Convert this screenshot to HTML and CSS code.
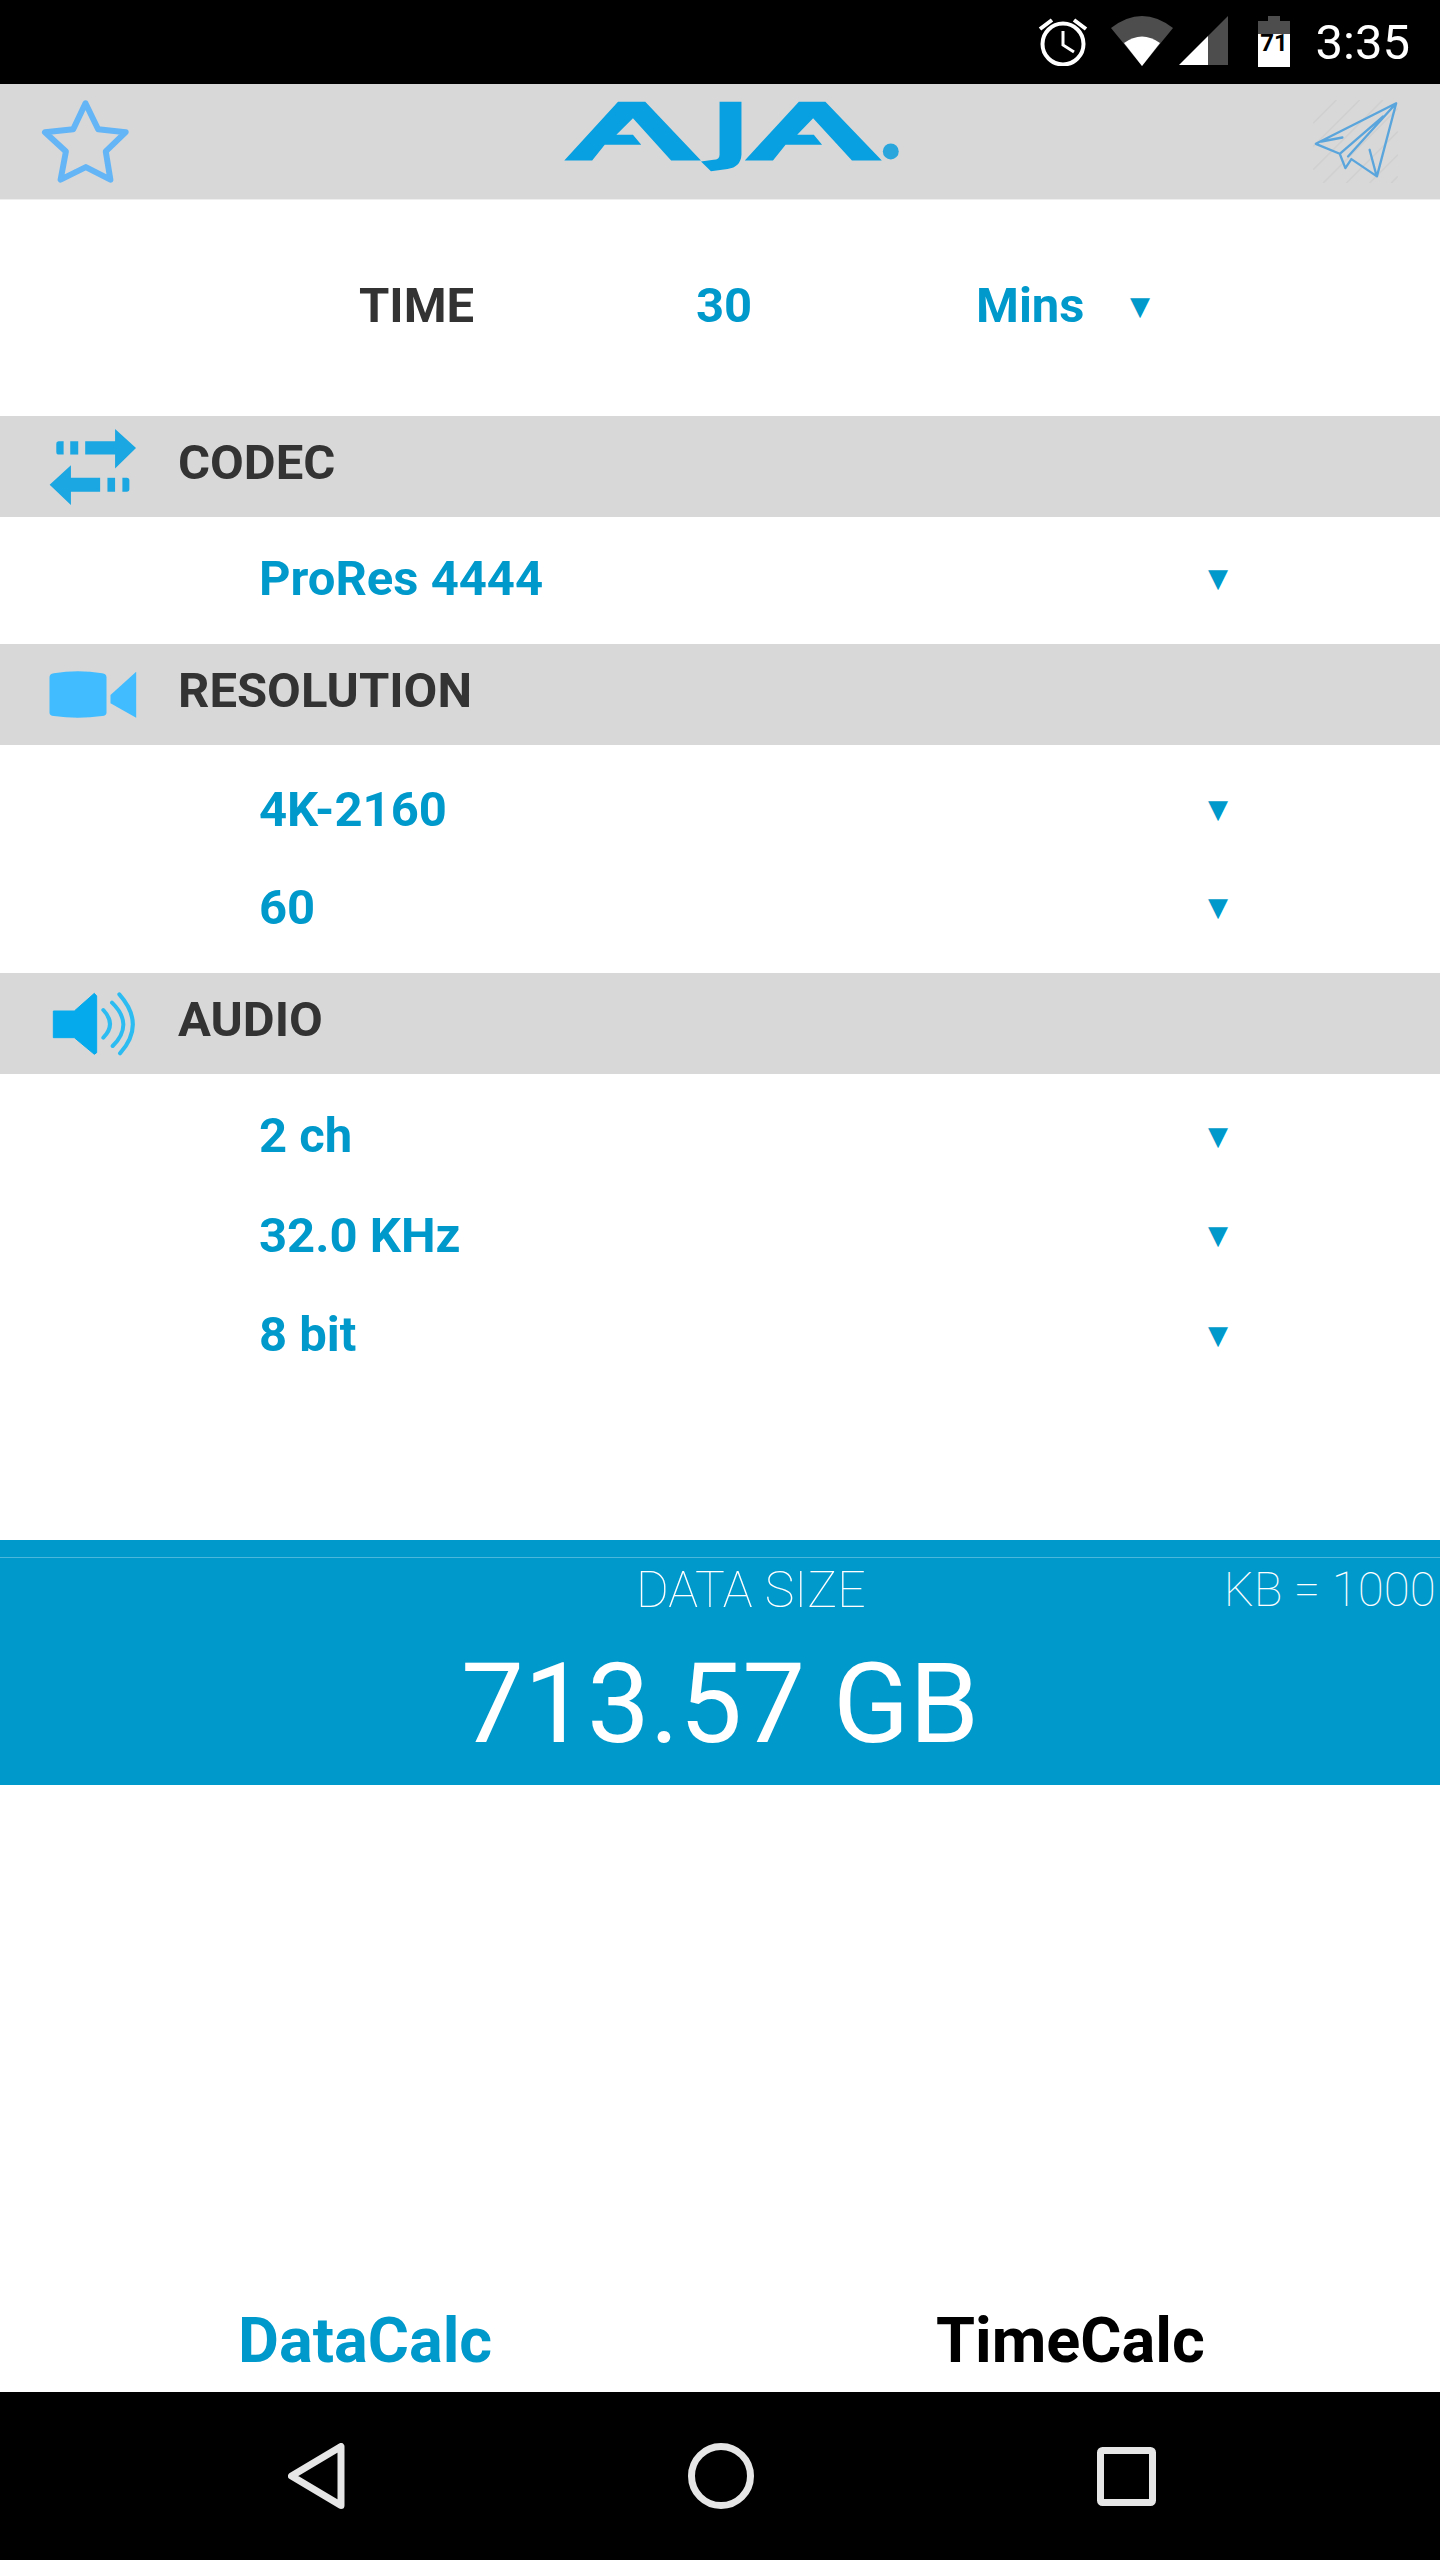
FILE: index.html
```html
<!DOCTYPE html>
<html lang="en">
<head>
    <meta charset="UTF-8">
    <meta name="viewport" content="width=device-width, initial-scale=1.0">
    <title>AJA DataCalc</title>
    <link rel="stylesheet" href="styles.css">
</head>
<body>
    <div class="app">
        <div class="status-bar">
            <svg class="status-alarm" viewBox="0 0 50 50" width="50" height="50">
                <circle cx="25" cy="28" r="20.5" fill="none" stroke="#fff" stroke-width="4"/>
                <path d="M25 15v14l11 7" fill="none" stroke="#fff" stroke-width="3"/>
                <path d="M2 13 14 4M48 13 36 4" fill="none" stroke="#fff" stroke-width="4"/>
            </svg>
            <svg class="status-wifi" viewBox="0 0 62 50" width="62" height="50">
                <path d="M0 12Q31-12 62 12L31 50Z" fill="#4d4d4d"/>
                <path d="M13 27Q31 14 49 27L31 50Z" fill="#fff"/>
            </svg>
            <svg class="status-signal" viewBox="0 0 49 50" width="49" height="50">
                <path d="M49 0V49H29V20Z" fill="#4d4d4d"/>
                <path d="M29 20V49H0Z" fill="#fff"/>
            </svg>
            <svg class="status-battery" viewBox="0 0 32 51" width="32" height="51">
                <path d="M10 0H22V5H32V18H0V5H10Z" fill="#4d4d4d"/>
                <path d="M0 18H32V51H0Z" fill="#fff"/>
                <text x="16" y="35" class="battery-level">71</text>
            </svg>
            <span class="status-time">3:35</span>
        </div>

        <header class="header">
            <svg class="star" viewBox="120 85 280 260" width="93" height="87">
                <path d="M257 100 295 178 378 187 318 245 332 330 258 292 182 330 198 245 135 187 220 178Z" fill="none" stroke="#64b5f6" stroke-width="18" stroke-linejoin="round"/>
            </svg>
            <svg class="logo" viewBox="120 60 1030 220" width="343" height="73">
                <g fill="#08a0e0">
                    <path d="M128 242 290 65H372L540 242H450L335 115 285 165H335L360 195H250L212 242Z"/>
                    <path d="M596 65H662V225Q660 262 620 268L570 275 540 245 578 240Q596 240 596 225Z"/>
                    <path d="M672 242 835 65H915L1085 242H995L878 115 830 165H880L905 195H795L757 242Z"/>
                </g>
                <circle cx="1112" cy="215" r="24" fill="#2aa6dc"/>
            </svg>
            <svg class="plane" viewBox="1060 300 255 250" width="85" height="83">
                <path d="M1060 370 1130 300M1060 440 1200 300M1060 510 1270 300M1090 550 1315 325M1160 550 1315 395M1230 550 1315 465M1295 550 1315 530" stroke="#d0d0d0" stroke-width="5" fill="none"/>
                <path d="M1310 310 1068 432 1140 462 1157 505 1175 478 1252 530ZM1140 462 1270 350M1165 470 1310 310M1085 425 1148 413M1230 450 1250 525" fill="none" stroke="#5aa5dc" stroke-width="7" stroke-linejoin="round" stroke-linecap="round"/>
            </svg>
        </header>

        <section class="time-row">
            <span class="time-label">TIME</span>
            <span class="value">30</span>
            <span class="value">Mins</span>
            <span class="arrow">▼</span>
        </section>

        <div class="bar bar-codec">
            <div class="bar-icon">
                <svg viewBox="80 50 280 245" width="93" height="82">
                    <g fill="#1aa7e2">
                        <path d="M108 103Q108 95 116 95H130V135H116Q108 135 108 127Z"/>
                        <path d="M150 95H174V135H150Z"/>
                        <path d="M195 95H285V58L348 115 285 177V135H195Z"/>
                        <path d="M152 167V205H240V247H152V287L88 226Z"/>
                        <path d="M262 205H285V247H262Z"/>
                        <path d="M307 205H320Q328 205 328 213V239Q328 247 320 247H307Z"/>
                    </g>
                </svg>
            </div>
            <h2 class="bar-label">CODEC</h2>
        </div>
        <div class="rows rows-codec">
            <div class="row"><span class="value">ProRes 4444</span><span class="arrow">▼</span></div>
        </div>

        <div class="bar">
            <div class="bar-icon">
                <svg viewBox="80 90 275 150" width="92" height="50">
                    <g fill="#40bcff">
                        <path d="M87 112Q87 102 100 100 172 88 245 100 258 102 258 112V218Q258 226 245 228 172 238 100 228 87 226 87 218Z"/>
                        <path d="M270 165 347 95V233L270 190Z"/>
                    </g>
                </svg>
            </div>
            <h2 class="bar-label">RESOLUTION</h2>
        </div>
        <div class="rows rows-resolution">
            <div class="row"><span class="value">4K-2160</span><span class="arrow">▼</span></div>
            <div class="row"><span class="value">60</span><span class="arrow">▼</span></div>
        </div>

        <div class="bar">
            <div class="bar-icon">
                <svg viewBox="95 65 255 195" width="85" height="65">
                    <path d="M102 125H165L225 72 232 80V250L225 255 165 205H102Z" fill="#05aaec" stroke="#05aaec" stroke-width="3" stroke-linejoin="round"/>
                    <path d="M252 122Q292 165 252 205M278 100Q345 165 280 230M300 75Q380 165 302 252" fill="none" stroke="#2dbcf2" stroke-width="12" stroke-linecap="round"/>
                </svg>
            </div>
            <h2 class="bar-label">AUDIO</h2>
        </div>
        <div class="rows rows-audio">
            <div class="row"><span class="value">2 ch</span><span class="arrow">▼</span></div>
            <div class="row"><span class="value">32.0 KHz</span><span class="arrow">▼</span></div>
            <div class="row"><span class="value">8 bit</span><span class="arrow">▼</span></div>
        </div>

        <section class="result">
            <div class="result-head">
                <span class="result-title">DATA SIZE</span>
                <span class="result-unit">KB = 1000</span>
            </div>
            <div class="result-value">713.57 GB</div>
        </section>

        <div class="spacer"></div>

        <div class="tabs">
            <a href="#" class="tab tab-active">DataCalc</a>
            <a href="#" class="tab">TimeCalc</a>
        </div>

        <nav class="nav-bar">
            <svg viewBox="0 0 57 66" width="57" height="66">
                <path d="M53 3.5V62.500L3.500 33Z" fill="none" stroke="#e6e6e6" stroke-width="7" stroke-linejoin="round"/>
            </svg>
            <svg viewBox="0 0 66 66" width="66" height="66">
                <circle cx="33" cy="33" r="29.500" fill="none" stroke="#e6e6e6" stroke-width="7"/>
            </svg>
            <svg viewBox="0 0 59 59" width="59" height="59">
                <rect x="3.500" y="3.500" width="52" height="52" rx="2" fill="none" stroke="#e6e6e6" stroke-width="7"/>
            </svg>
        </nav>
    </div>
</body>
</html>
```

FILE: styles.css
```css
:root {
    --blue: #0099cc;
    --grey: #d8d8d8;
    --dark: #333333;
}

* {
    margin: 0;
    padding: 0;
    box-sizing: border-box;
    font-family: Roboto, 'Liberation Sans', sans-serif;
}

body {
    background: #ffffff;
    overflow: hidden;
}

.app {
    height: 2560px;
    display: flex;
    flex-direction: column;
    overflow: hidden;
}

.status-bar {
    background: #000000;
    height: 84px;
    flex: none;
    display: flex;
    align-items: flex-start;
    padding: 16px 30px 0 0;
    justify-content: flex-end;
}

.status-alarm {
    margin-right: 23px;
}

.status-wifi {
    margin-right: 6px;
}

.status-signal {
    margin-right: 30px;
}

.status-battery {
    margin-right: 26px;
}

.status-time {
    color: #ffffff;
    font-size: 49px;
    line-height: 54px;
}

.battery-level {
    font-size: 24px;
    font-weight: 700;
    fill: #000000;
    text-anchor: middle;
}

.header {
    background: var(--grey);
    height: 116px;
    flex: none;
    border-bottom: 1px solid #eeeeee;
    display: flex;
    align-items: center;
    justify-content: space-between;
    padding: 0 42px 0 40px;
}

.logo {
    margin: 0 0 10px 18px;
}

.time-row {
    height: 216px;
    flex: none;
    display: grid;
    grid-template-columns: 337px 280px 154px auto;
    align-items: center;
    padding: 0 0 5px 359px;
}

.time-label {
    color: var(--dark);
    font-size: 49px;
    font-weight: 700;
}

.value {
    color: var(--blue);
    font-size: 49px;
    font-weight: 700;
}

.arrow {
    color: var(--blue);
    font-size: 26px;
    font-family: 'DejaVu Sans', sans-serif;
}

.bar {
    background: var(--grey);
    height: 101px;
    flex: none;
    display: flex;
    align-items: center;
    padding-left: 43px;
}

.bar-icon {
    width: 100px;
    margin-right: 35px;
    display: flex;
    justify-content: center;
}

.bar-label {
    color: var(--dark);
    font-size: 49px;
    font-weight: 700;
    margin-bottom: 8px;
}

.rows {
    flex: none;
}

.rows-codec {
    height: 127px;
    padding-top: 12px;
}

.rows-resolution {
    height: 228px;
    padding-top: 15px;
}

.rows-audio {
    padding-top: 12px;
}

.row {
    height: 98px;
    display: flex;
    align-items: center;
    justify-content: space-between;
    padding: 0 212px 0 259px;
}

.rows-audio .row {
    height: 99.5px;
}

.result {
    background: var(--blue);
    height: 245px;
    flex: none;
    margin-top: 155px;
    padding-top: 17px;
    overflow: hidden;
}

.result-head {
    border-top: 1px solid rgba(255, 255, 255, 0.3);
    height: 66px;
    display: flex;
    align-items: center;
    padding-left: 636px;
    white-space: nowrap;
}

.result-title,
.result-unit {
    color: #ffffff;
    font-size: 50px;
    font-weight: 100;
}

.result-unit {
    font-size: 47.5px;
    margin-left: 358px;
}

.result-value {
    color: #ffffff;
    font-size: 112px;
    line-height: 161px;
    padding-left: 461px;
}

.spacer {
    flex: 1;
}

.tabs {
    height: 104px;
    flex: none;
    display: flex;
    align-items: center;
    padding-left: 238px;
}

.tab {
    color: #000000;
    font-size: 63px;
    font-weight: 700;
    text-decoration: none;
}

.tab-active {
    color: var(--blue);
    width: 698px;
}

.nav-bar {
    background: #000000;
    height: 168px;
    flex: none;
    display: flex;
    align-items: center;
    padding-left: 288px;
    gap: 343px;
}
```
